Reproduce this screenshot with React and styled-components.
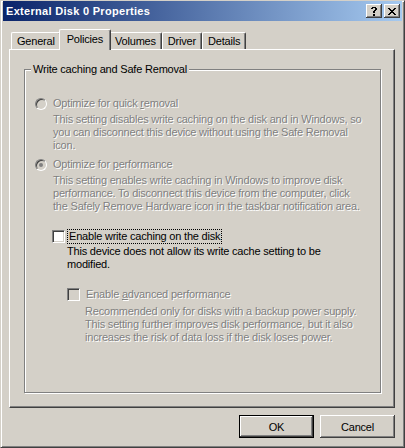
import React from 'react';
import styled, { createGlobalStyle } from 'styled-components';

const GlobalStyle = createGlobalStyle`
  html, body {
    margin: 0;
    padding: 0;
    background: #d4d0c8;
  }
  body {
    font-family: "Liberation Sans", Arial, sans-serif;
    font-size: 11px;
    letter-spacing: -0.2px;
    color: #000;
  }
`;

const Window = styled.div`
  box-sizing: border-box;
  width: 405px;
  height: 448px;
  background: #d4d0c8;
  border: 1px solid;
  border-color: #d4d0c8 #404040 #404040 #d4d0c8;
  box-shadow: inset 1px 1px 0 #fff, inset -1px -1px 0 #808080;
  padding: 0 2px 2px 2px;
  display: flex;
  flex-direction: column;
`;

const TitleBar = styled.div`
  height: 20px;
  flex-shrink: 0;
  background: linear-gradient(to right, #0a246a, #a6caf0);
  display: flex;
  align-items: center;
  justify-content: space-between;
  padding: 0 2px 0 3px;
`;

const TitleText = styled.span`
  color: #fff;
  font-weight: bold;
  font-size: 11px;
  letter-spacing: 0.3px;
  white-space: nowrap;
`;

const TitleButtons = styled.div`
  display: flex;
  gap: 2px;
`;

const CaptionButton = styled.div`
  box-sizing: border-box;
  width: 16px;
  height: 14px;
  background: #d4d0c8;
  box-shadow: inset -1px -1px 0 #404040, inset 1px 1px 0 #fff,
    inset -2px -2px 0 #808080;
  display: flex;
  align-items: center;
  justify-content: center;
`;

const Body = styled.div`
  flex: 1;
  display: flex;
  flex-direction: column;
  padding: 8px 7px 7px 6px;
`;

const TabStrip = styled.div`
  display: flex;
  align-items: flex-end;
  height: 20px;
  padding-left: 2px;
`;

const Tab = styled.div`
  box-sizing: border-box;
  position: relative;
  height: ${p => (p.$active ? '21px' : '17px')};
  margin: ${p => (p.$active ? '0 -2px -1px' : '0')};
  padding: ${p => (p.$active ? '0 7px 2px' : '0 5px')};
  z-index: ${p => (p.$active ? 1 : 0)};
  background: #d4d0c8;
  border-top: 1px solid #fff;
  border-left: 1px solid #fff;
  border-right: 1px solid #404040;
  border-radius: 2px 2px 0 0;
  box-shadow: inset -1px 0 0 #808080;
  display: flex;
  align-items: center;
  white-space: nowrap;
`;

const Panel = styled.div`
  box-sizing: border-box;
  flex: 1;
  display: flex;
  flex-direction: column;
  border: 1px solid;
  border-color: #fff #404040 #404040 #fff;
  box-shadow: inset -1px -1px 0 #808080;
  padding: 13px 12px 13px 14px;
`;

const Group = styled.fieldset`
  flex: 1;
  margin: 0 1px 1px 0;
  padding: 21px 0 0 10px;
  border: 1px solid #808080;
  box-shadow: 1px 1px 0 #fff, inset 1px 1px 0 #fff;
  min-width: 0;
`;

const Legend = styled.legend`
  margin-left: -4px;
  padding: 0 2px;
  line-height: 13px;
  background: #d4d0c8;
`;

const Option = styled.div`
  display: grid;
  grid-template-columns: ${p => p.$col}px auto;
  margin-left: ${p => p.$indent || 0}px;
  margin-top: ${p => p.$gap || 0}px;
  color: ${p => (p.$disabled ? '#808080' : '#000')};
  text-shadow: ${p => (p.$disabled ? '1px 1px 0 #fff' : 'none')};
`;

const Radio = styled.span`
  box-sizing: border-box;
  width: 12px;
  height: 12px;
  margin-top: 1px;
  border-radius: 50%;
  border: 1px solid;
  border-color: #808080 #fff #fff #808080;
  box-shadow: inset 1px 1px 0 #404040, inset -1px -1px 0 #d4d0c8;
  background: #d4d0c8;
  display: flex;
  align-items: center;
  justify-content: center;

  &::after {
    content: '';
    display: ${p => (p.$checked ? 'block' : 'none')};
    width: 4px;
    height: 4px;
    border-radius: 50%;
    background: #808080;
  }
`;

const Check = styled.span`
  box-sizing: border-box;
  width: 13px;
  height: 13px;
  margin-top: ${p => p.$top || 0}px;
  border: 1px solid;
  border-color: #808080 #fff #fff #808080;
  box-shadow: inset 1px 1px 0 #404040, inset -1px -1px 0 #d4d0c8;
  background: ${p => (p.$disabled ? '#d4d0c8' : '#fff')};
`;

const Label = styled.span`
  justify-self: start;
  line-height: 13px;
  white-space: nowrap;
  padding: ${p => (p.$focus ? '0 1px' : '0')};
  border: ${p => (p.$focus ? '1px dotted #000' : 'none')};
`;

const Desc = styled.div`
  grid-column: 2;
  margin-top: ${p => p.$top || 0}px;
  margin-left: ${p => p.$shift || 0}px;
  line-height: 13px;
  white-space: nowrap;
`;

const ButtonRow = styled.div`
  display: flex;
  justify-content: flex-end;
  gap: 6px;
  margin-top: 7px;
`;

const Button = styled.button`
  box-sizing: border-box;
  width: 75px;
  height: 23px;
  padding: 0;
  font-family: inherit;
  font-size: 11px;
  letter-spacing: inherit;
  color: #000;
  background: #d4d0c8;
  border: ${p => (p.$default ? '1px solid #000' : 'none')};
  box-shadow: inset -1px -1px 0 #404040, inset 1px 1px 0 #fff,
    inset -2px -2px 0 #808080;
`;

const HelpGlyph = () => (
  <svg width="6" height="9" viewBox="0 0 6 9" shapeRendering="crispEdges">
    <g fill="#000">
      <rect x="1" y="0" width="4" height="1" />
      <rect x="0" y="1" width="2" height="1" />
      <rect x="4" y="1" width="2" height="2" />
      <rect x="3" y="3" width="2" height="1" />
      <rect x="2" y="4" width="2" height="2" />
      <rect x="2" y="7" width="2" height="2" />
    </g>
  </svg>
);

const CloseGlyph = () => (
  <svg width="8" height="7" viewBox="0 0 8 7" shapeRendering="crispEdges">
    <g fill="#000">
      <rect x="0" y="0" width="2" height="1" />
      <rect x="6" y="0" width="2" height="1" />
      <rect x="1" y="1" width="2" height="1" />
      <rect x="5" y="1" width="2" height="1" />
      <rect x="2" y="2" width="4" height="1" />
      <rect x="3" y="3" width="2" height="1" />
      <rect x="2" y="4" width="4" height="1" />
      <rect x="1" y="5" width="2" height="1" />
      <rect x="5" y="5" width="2" height="1" />
      <rect x="0" y="6" width="2" height="1" />
      <rect x="6" y="6" width="2" height="1" />
    </g>
  </svg>
);

const tabs = ['General', 'Policies', 'Volumes', 'Driver', 'Details'];

const Lines = ({ lines, ...rest }) =>
  lines.map((l, i) => (
    <Desc key={i} {...rest} $top={i === 0 ? rest.$top : 0}>
      {l}
    </Desc>
  ));

export default function App() {
  return (
    <>
      <GlobalStyle />
      <Window>
        <TitleBar>
          <TitleText>External Disk 0 Properties</TitleText>
          <TitleButtons>
            <CaptionButton><HelpGlyph /></CaptionButton>
            <CaptionButton><CloseGlyph /></CaptionButton>
          </TitleButtons>
        </TitleBar>
        <Body>
          <TabStrip>
            {tabs.map(t => (
              <Tab key={t} $active={t === 'Policies'}>{t}</Tab>
            ))}
          </TabStrip>
          <Panel>
            <Group>
              <Legend>Write caching and Safe Removal</Legend>

              <Option $col={18} $disabled>
                <Radio />
                <Label>Optimize for quick <u>r</u>emoval</Label>
                <Lines
                  $top={3}
                  lines={[
                    'This setting disables write caching on the disk and in Windows, so',
                    'you can disconnect this device without using the Safe Removal',
                    'icon.',
                  ]}
                />
              </Option>

              <Option $col={18} $gap={6} $disabled>
                <Radio $checked />
                <Label>Optimize for <u>p</u>erformance</Label>
                <Lines
                  $top={3}
                  lines={[
                    'This setting enables write caching in Windows to improve disk',
                    'performance. To disconnect this device from the computer, click',
                    'the Safely Remove Hardware icon in the taskbar notification area.',
                  ]}
                />
              </Option>

              <Option $col={15} $indent={17} $gap={16}>
                <Check $top={1} />
                <Label $focus>Enable write caching on the disk</Label>
                <Lines
                  $top={1}
                  lines={[
                    'This device does not allow its write cache setting to be',
                    'modified.',
                  ]}
                />
              </Option>

              <Option $col={19} $indent={32} $gap={17} $disabled>
                <Check $disabled />
                <Label>Enable <u>a</u>dvanced performance</Label>
                <Lines
                  $top={4}
                  $shift={-1}
                  lines={[
                    'Recommended only for disks with a backup power supply.',
                    'This setting further improves disk performance, but it also',
                    'increases the risk of data loss if the disk loses power.',
                  ]}
                />
              </Option>
            </Group>
          </Panel>
          <ButtonRow>
            <Button $default>OK</Button>
            <Button>Cancel</Button>
          </ButtonRow>
        </Body>
      </Window>
    </>
  );
}
